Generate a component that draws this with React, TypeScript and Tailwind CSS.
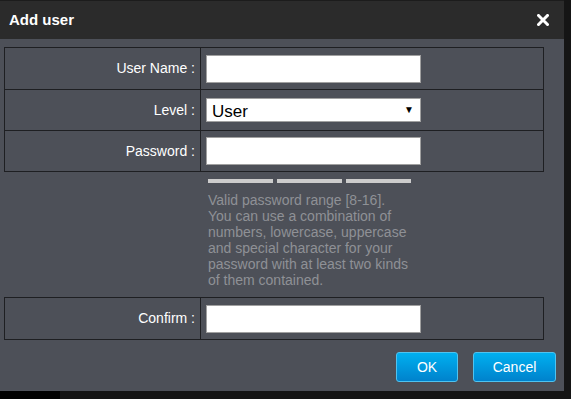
import React from 'react';

const font = { fontFamily: '"Liberation Sans", Arial, sans-serif' };

const Row: React.FC<{ label: string; children: React.ReactNode; first?: boolean }> = ({ label, children, first }) => (
  <div className={`flex h-[41px] ${first ? '' : 'border-t border-[#1e1f22]'}`}>
    <div className="w-[196px] flex items-center justify-end pr-[5px] text-[14px] text-white border-r border-[#1e1f22]">
      {label}
    </div>
    <div className="flex-1 flex items-center pl-[5px]">{children}</div>
  </div>
);

const TextBox = () => (
  <input type="text" className="w-[215px] h-[28px] bg-white border border-[#a0a0a0] outline-none px-1 text-[14px] text-black" />
);

export default function App() {
  return (
    <div className="w-[571px] h-[399px] bg-[#151515] overflow-hidden relative" style={font}>
      <div className="w-[564px] h-[391px] bg-[#4d5058] flex flex-col border-t border-[#1c1c1c]">
        {/* Header */}
        <div className="h-[38px] bg-[#2b2b2b] flex items-center justify-between pl-[9px] pr-[15px]">
          <span className="text-white font-bold text-[15px]">Add user</span>
          <svg width="12" height="12" viewBox="0 0 12 12" className="mt-[-1px]">
            <path d="M1.5 1.5 L10.5 10.5 M10.5 1.5 L1.5 10.5" stroke="white" strokeWidth="3" strokeLinecap="square" />
          </svg>
        </div>

        <div className="pl-[4px] pt-[8px]">
          <div className="w-[540px] border border-[#1e1f22]">
            <Row label="User Name :" first>
              <TextBox />
            </Row>
            <Row label="Level :">
              <div className="w-[215px] h-[24px] bg-white border border-[#a0a0a0] flex items-center justify-between pl-[5px] pr-[6px]">
                <span className="text-[17px] text-black leading-none pt-[3px]">User</span>
                <span className="text-[10px] text-black leading-none">▼</span>
              </div>
            </Row>
            <Row label="Password :">
              <TextBox />
            </Row>
          </div>

          {/* Strength bars + hint */}
          <div className="pl-[204px] pt-[7px]">
            <div className="flex gap-[4px]">
              <div className="w-[65px] h-[4px] bg-[#cccccc]" />
              <div className="w-[65px] h-[4px] bg-[#cccccc]" />
              <div className="w-[65px] h-[4px] bg-[#cccccc]" />
            </div>
            <p className="w-[215px] mt-[9px] text-[14px] leading-[16px] text-[#8f9196]">
              Valid password range [8-16].
              <br />
              You can use a combination of numbers, lowercase, uppercase and special character for your password with at least two kinds of them contained.
            </p>
          </div>

          <div className="w-[540px] border border-[#1e1f22] mt-[9px]">
            <Row label="Confirm :" first>
              <TextBox />
            </Row>
          </div>

          {/* Buttons */}
          <div className="flex justify-end gap-[15px] pr-[8px] mt-[12px]">
            <button className="w-[62px] h-[30px] rounded-[3px] border border-[#4fc3f0] bg-gradient-to-b from-[#00b0f0] to-[#0082cc] text-white text-[14px]">
              OK
            </button>
            <button className="w-[83px] h-[30px] rounded-[3px] border border-[#4fc3f0] bg-gradient-to-b from-[#00b0f0] to-[#0082cc] text-white text-[14px]">
              Cancel
            </button>
          </div>
        </div>
      </div>
      <div className="absolute left-0 bottom-0 w-[60px] h-[8px] bg-black" />
    </div>
  );
}
